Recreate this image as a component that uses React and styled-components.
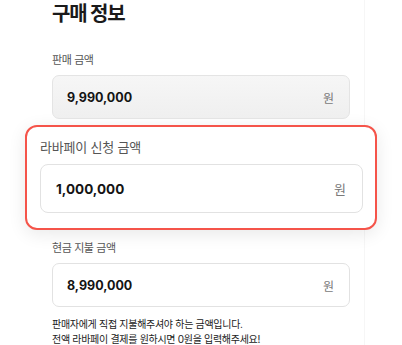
import React from "react";
import styled, { createGlobalStyle } from "styled-components";

const GlobalStyle = createGlobalStyle`
  html, body {
    margin: 0;
    padding: 0;
    background: #ffffff;
    font-family: "Inter", "Noto Sans CJK KR", sans-serif;
    overflow: hidden;
  }
`;

const Panel = styled.div`
  box-sizing: border-box;
  margin-left: 38px;
  width: 327px;
  min-height: 345px;
  padding: 0 14px;
  border-right: 1px solid #f6f6f6;
`;

const Title = styled.h1`
  margin: 0 0 23px;
  font-size: 20px;
  line-height: 28px;
  font-weight: 700;
  letter-spacing: -1.2px;
  color: #1a1a1a;
`;

const Field = styled.div`
  display: flex;
  flex-direction: column;
  gap: ${(p) => (p.$big ? "7px" : "6px")};
`;

const Label = styled.div`
  font-size: ${(p) => (p.$big ? "13px" : "11px")};
  line-height: ${(p) => (p.$big ? "20px" : "18px")};
  letter-spacing: ${(p) => (p.$big ? "-0.2px" : "-0.4px")};
  color: #555;
`;

const AmountBox = styled.div`
  box-sizing: border-box;
  display: flex;
  align-items: center;
  justify-content: space-between;
  height: ${(p) => (p.$big ? "49px" : "44px")};
  padding: 0 ${(p) => (p.$big ? "16px 0 15px" : "15px 0 14px")};
  border: 1px solid ${(p) => (p.$disabled ? "#e4e4e4" : "#e2e2e2")};
  border-radius: ${(p) => (p.$big ? "8px" : "7px")};
  background: ${(p) =>
    p.$disabled ? "linear-gradient(#f6f6f6, #efefef)" : "#ffffff"};
`;

const Value = styled.span`
  font-size: ${(p) => (p.$big ? "13.5px" : "12.5px")};
  font-weight: 700;
  color: #141414;
`;

const Unit = styled.span`
  font-size: ${(p) => (p.$big ? "13px" : "12px")};
  color: #7a7a7a;
`;

const Highlight = styled.div`
  margin: 6px -27px 9px;
  padding: 10px 12px 15px 13px;
  border: 2px solid #f5544a;
  border-radius: 12px;
  background: #ffffff;
  box-shadow: 0 4px 18px rgba(0, 0, 0, 0.09);
`;

const Help = styled.p`
  margin: 10px 0 0;
  font-size: 10px;
  line-height: 15px;
  letter-spacing: -0.3px;
  color: #222;
`;

function AmountField({ label, value, big, disabled }) {
  return (
    <Field $big={big}>
      <Label $big={big}>{label}</Label>
      <AmountBox $big={big} $disabled={disabled}>
        <Value $big={big}>{value}</Value>
        <Unit $big={big}>원</Unit>
      </AmountBox>
    </Field>
  );
}

export default function App() {
  return (
    <>
      <GlobalStyle />
      <Panel>
        <Title>구매 정보</Title>
        <AmountField label="판매 금액" value="9,990,000" disabled />
        <Highlight>
          <AmountField label="라바페이 신청 금액" value="1,000,000" big />
        </Highlight>
        <AmountField label="현금 지불 금액" value="8,990,000" />
        <Help>
          판매자에게 직접 지불해주셔야 하는 금액입니다.
          <br />
          전액 라바페이 결제를 원하시면 0원을 입력해주세요!
        </Help>
      </Panel>
    </>
  );
}
